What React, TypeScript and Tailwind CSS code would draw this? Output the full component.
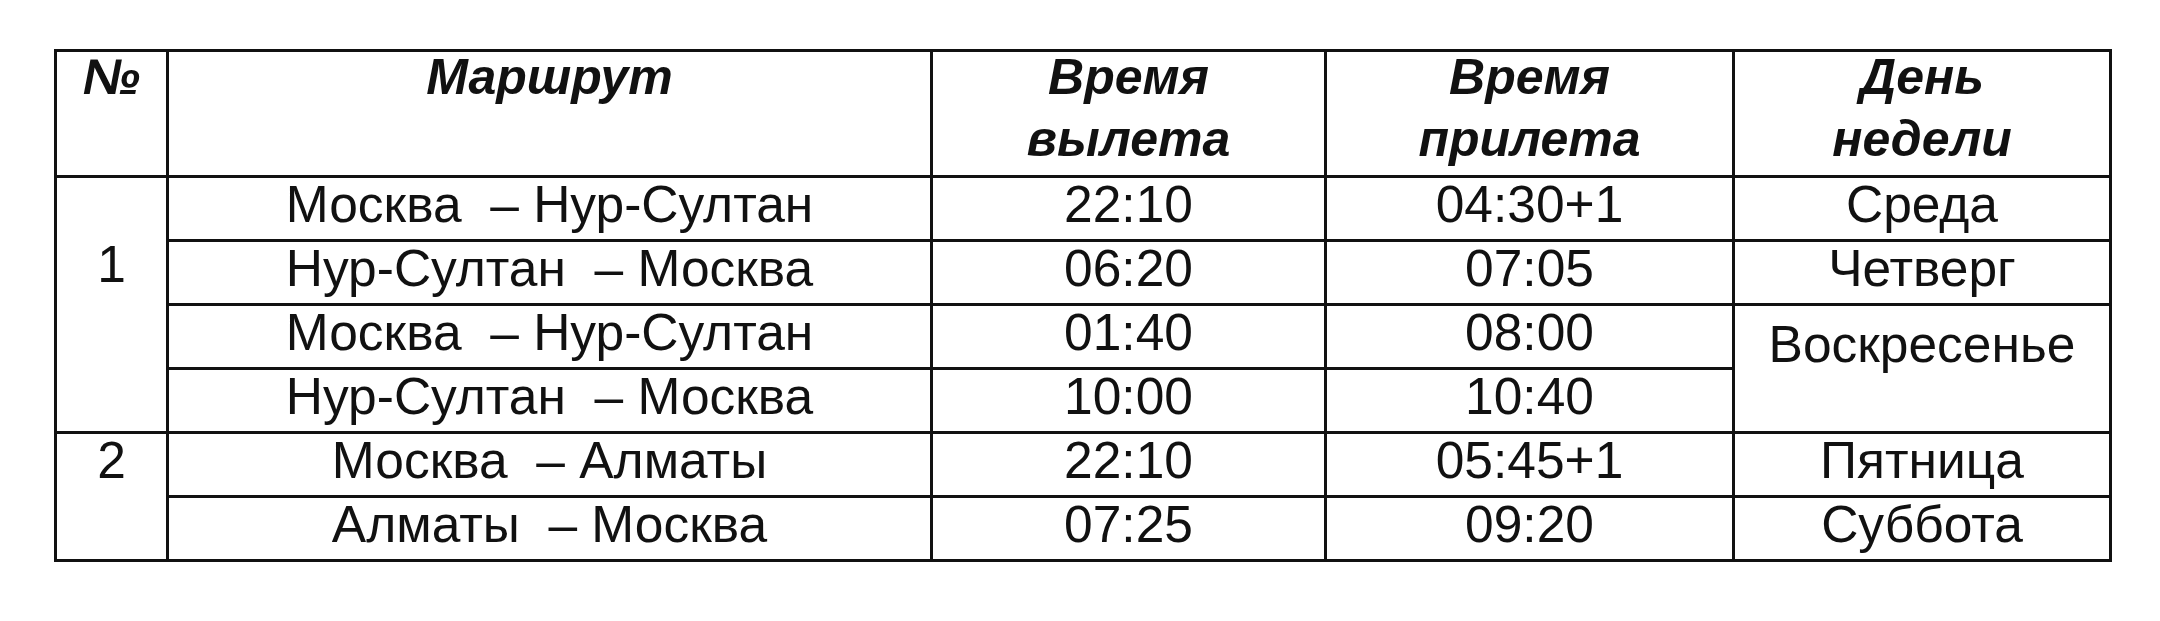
const rows = [
  { route: 'Москва\u00a0 – Нур-Султан', dep: '22:10', arr: '04:30+1' },
  { route: 'Нур-Султан\u00a0 – Москва', dep: '06:20', arr: '07:05' },
  { route: 'Москва\u00a0 – Нур-Султан', dep: '01:40', arr: '08:00' },
  { route: 'Нур-Султан\u00a0 – Москва', dep: '10:00', arr: '10:40' },
  { route: 'Москва\u00a0 – Алматы', dep: '22:10', arr: '05:45+1' },
  { route: 'Алматы\u00a0 – Москва', dep: '07:25', arr: '09:20' },
];

const cell = 'border-[3px] border-[#111] align-top text-center p-0';
const th = 'border-[3px] border-[#111] align-top text-center p-0 font-bold italic text-[50px] leading-[62px]';

export default function App() {
  return (
    <div className="w-[2160px] h-[621px] bg-white text-[#111] font-['Liberation_Sans',Arial,sans-serif] text-[51.5px] leading-[52px]">
      <div className="pt-[49px] pl-[54px]">
        <table className="table-fixed border-collapse w-[2055px]">
          <colgroup>
            <col className="w-[112px]" />
            <col className="w-[764px]" />
            <col className="w-[394px]" />
            <col className="w-[408px]" />
            <col className="w-[377px]" />
          </colgroup>
          <thead>
            <tr className="h-[126px]">
              <th className={th}><div className="-mt-[6px]">№</div></th>
              <th className={th}><div className="-mt-[6px]">Маршрут</div></th>
              <th className={th}><div className="-mt-[6px]">Время<br />вылета</div></th>
              <th className={th}><div className="-mt-[6px]">Время<br />прилета</div></th>
              <th className={th}><div className="-mt-[6px]">День<br />недели</div></th>
            </tr>
          </thead>
          <tbody>
            {rows.map((r, i) => (
              <tr key={i} className="h-[64px]">
                {i === 0 && <td rowSpan={4} className={cell + ' pt-[60px]'}>1</td>}
                {i === 4 && <td rowSpan={2} className={cell}>2</td>}
                <td className={cell}>{r.route}</td>
                <td className={cell}>{r.dep}</td>
                <td className={cell}>{r.arr}</td>
                {i === 0 && <td className={cell}>Среда</td>}
                {i === 1 && <td className={cell}>Четверг</td>}
                {i === 2 && <td rowSpan={2} className={cell + ' pt-[12px]'}>Воскресенье</td>}
                {i === 4 && <td className={cell}>Пятница</td>}
                {i === 5 && <td className={cell}>Суббота</td>}
              </tr>
            ))}
          </tbody>
        </table>
      </div>
    </div>
  );
}
